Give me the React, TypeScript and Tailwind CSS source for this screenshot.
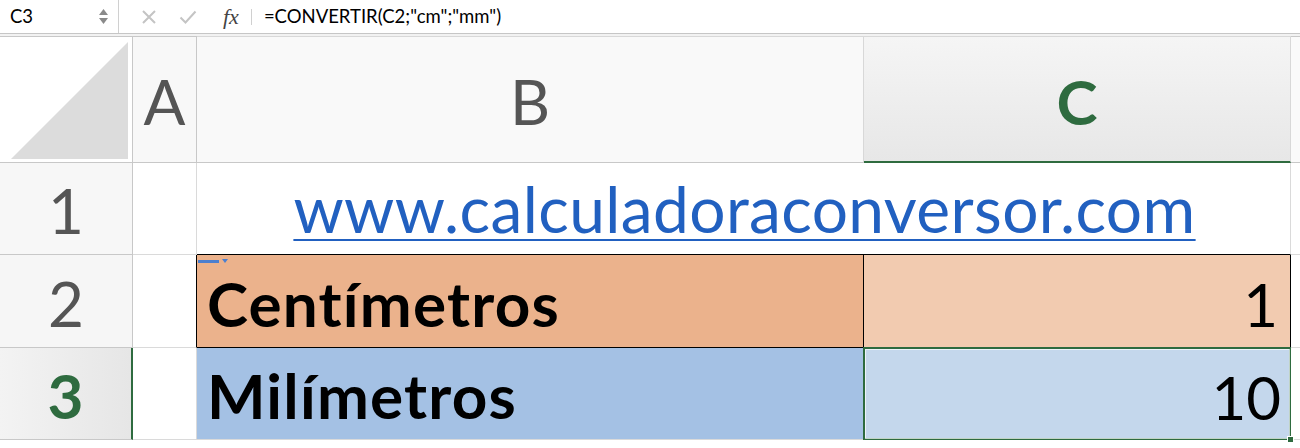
const font = { fontFamily: 'Lato, "Open Sans", sans-serif' }

function FormulaBar() {
  return (
    <div className="flex h-[34px] items-center border-b border-[#c6c6c6] bg-white text-[18.5px] text-black" style={font}>
      <div className="flex h-full w-[119px] items-center justify-between border-r border-[#d0d0d0] pl-[10px] pr-[10px]">
        <span>C3</span>
        <div className="flex flex-col gap-[3px]">
          <svg width="9" height="6" viewBox="0 0 9 6"><path d="M4.5 0L9 6H0z" fill="#8a8a8a" /></svg>
          <svg width="9" height="6" viewBox="0 0 9 6"><path d="M0 0h9L4.5 6z" fill="#8a8a8a" /></svg>
        </div>
      </div>
      <div className="flex h-full items-center pl-[22px]">
        <svg width="16" height="16" viewBox="0 0 16 16">
          <path d="M2 2L14 14M14 2L2 14" stroke="#c4c4c4" strokeWidth="2" />
        </svg>
        <svg className="ml-[22px]" width="18" height="16" viewBox="0 0 18 16">
          <path d="M1.5 8.5L6.5 13.5L16.5 2.5" stroke="#c4c4c4" strokeWidth="2" fill="none" />
        </svg>
        <span className="ml-[26px] text-[22px] italic text-[#444]" style={{ fontFamily: '"Liberation Serif", serif' }}>
          fx
        </span>
        <div className="ml-[12px] h-[16px] w-px bg-[#d0d0d0]" />
        <span className="ml-[12px]">=CONVERTIR(C2;"cm";"mm")</span>
      </div>
    </div>
  )
}

export default function App() {
  return (
    <div className="h-[448px] w-[1300px] overflow-hidden bg-white" style={font}>
      <FormulaBar />
      <div className="h-[2px] bg-[#f2f2f2]" />
      <div className="grid grid-cols-[133px_64px_667px_427px_1fr] grid-rows-[127px_92px_93px_92px_1fr]">
        {/* header row */}
        <div className="flex items-end justify-end border-t border-r border-b border-[#c8c8c8] bg-white pb-[3px] pr-[4px]">
          <svg width="117" height="117" viewBox="0 0 117 117"><path d="M117 0V117H0z" fill="#dcdcdc" /></svg>
        </div>
        <div className="flex items-center justify-center border-t border-r border-b border-[#c8c8c8] bg-[#f8f8f8] pt-[4px] text-[62px] text-[#555]">A</div>
        <div className="flex items-center justify-center border-t border-r border-b border-[#d8d8d8] border-b-[#c8c8c8] bg-[#f9f9f9] pt-[4px] text-[62px] text-[#555]">B</div>
        <div className="flex items-center justify-center border-t border-r border-[#d8d8d8] border-b-2 border-b-[#2e6b3f] bg-linear-to-b from-[#f5f5f5] to-[#e7e7e7] pt-[4px] text-[62px] font-bold text-[#2e6b3f]">C</div>
        <div className="border-t border-b border-[#c8c8c8] bg-[#fafafa]" />

        {/* row 1 */}
        <div className="flex items-center justify-center border-r border-b border-[#c8c8c8] bg-[#f7f7f7] pt-[4px] text-[62px] text-[#555]">1</div>
        <div className="border-r border-b border-[#dadada]" />
        <div className="col-span-2 flex items-end justify-center border-r border-b border-[#dadada] border-b-black pb-[13px] pl-[2px] text-[64px] leading-none tracking-[0.4px] text-[#2160c0] underline decoration-[2px] underline-offset-[6px]">
          www.calculadoraconversor.com
        </div>
        <div className="border-b border-[#dadada]" />

        {/* row 2 */}
        <div className="flex items-center justify-center border-r border-b border-[#c8c8c8] bg-[#f6f6f6] pt-[4px] text-[62px] text-[#555]">2</div>
        <div className="border-r border-b border-[#dadada] border-r-black" />
        <div className="relative flex items-end border-r border-b border-black bg-[#ebb28c] pb-[13px] pl-[10px] text-[62px] font-bold leading-none tracking-[1.2px] text-black">
          <div className="absolute left-[1px] top-[4px] flex items-center gap-[3px]">
            <div className="h-[3px] w-[21px] bg-[#4b7fcf]" />
            <svg width="6" height="4" viewBox="0 0 6 4"><path d="M0 0h6L3 4z" fill="#4b7fcf" /></svg>
          </div>
          Centímetros
        </div>
        <div className="flex items-end justify-end border-r border-b border-black bg-[#f2cbb0] pb-[13px] pr-[12px] text-[60px] leading-none text-black">1</div>
        <div className="border-b border-[#dadada]" />

        {/* row 3 */}
        <div className="flex items-center justify-center border-r-2 border-b border-[#c8c8c8] border-r-[#2e6b3f] bg-linear-to-r from-[#f3f3f3] to-[#e6e6e6] pt-[4px] text-[62px] font-bold text-[#2e6b3f]">3</div>
        <div className="border-r border-b border-[#dadada]" />
        <div className="flex items-end border-r border-b border-[#dadada] bg-[#a4c1e4] pb-[13px] pl-[10px] text-[62px] font-bold leading-none tracking-[1.2px] text-black">Milímetros</div>
        <div className="relative flex items-end justify-end bg-[#c4d7ec] pb-[13px] pr-[10px] text-[60px] leading-none text-black">
          <div className="absolute -left-px -top-px bottom-0 right-0 border-2 border-[#2e6b3f]" />
          <div className="absolute inset-[1px] border border-white/70" />
          <div className="absolute -bottom-[3px] -right-[3px] h-[7px] w-[7px] border border-white bg-[#2e6b3f]" />
          <span className="relative">10</span>
        </div>
        <div className="border-b border-[#dadada]" />

        {/* row 4 */}
        <div className="border-r border-[#c8c8c8] bg-[#f7f7f7]" />
        <div className="border-r border-[#dadada]" />
        <div className="border-r border-[#dadada]" />
        <div className="border-r border-[#dadada]" />
        <div />
      </div>
    </div>
  )
}
